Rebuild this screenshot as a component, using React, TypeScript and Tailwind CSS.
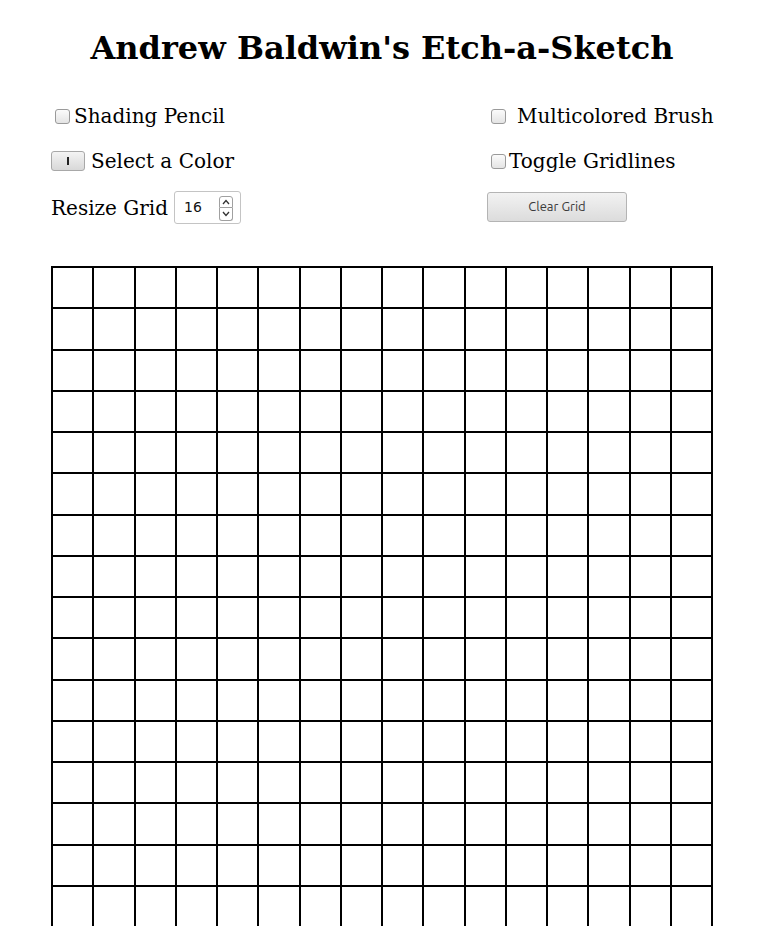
import React from "react";

function Check() {
  return (
    <span className="block w-[15px] h-[15px] rounded-[3px] border border-[#9a9a9a] bg-gradient-to-b from-[#fbfbfb] to-[#e4e4e4] shrink-0" />
  );
}

export default function App() {
  const cells = Array.from({ length: 256 }, (_, i) => i);
  return (
    <div className="w-[784px] bg-white text-black font-['DejaVu_Serif',serif]">
      <div className="w-[764px] pt-[30px] text-center">
        <h1 className="text-[32px] leading-[37px] font-bold">Andrew Baldwin's Etch-a-Sketch</h1>
      </div>
      <div className="flex pl-[51px] mt-[34px] text-[20px]">
        <div className="w-[436px] flex flex-col">
          <div className="h-[30px] flex items-center">
            <span className="ml-[4px] mr-[4px]"><Check /></span>
            <span>Shading Pencil</span>
          </div>
          <div className="h-[30px] mt-[15px] flex items-center">
            <span className="w-[34px] h-[20px] rounded-[3px] border border-[#a8a8a8] bg-gradient-to-b from-[#f4f4f4] to-[#d8d8d8] flex items-center justify-center mr-[6px]">
              <span className="w-[2px] h-[8px] bg-[#222]" />
            </span>
            <span>Select a Color</span>
          </div>
          <div className="h-[33px] mt-[15px] flex items-center">
            <span>Resize Grid</span>
            <span className="ml-[6px] w-[67px] h-[33px] rounded-[3px] border border-[#c4c4c4] bg-white flex items-center relative">
              <span className="ml-[9px] text-[14px] font-['DejaVu_Sans',sans-serif] text-[#111]">16</span>
              <span className="absolute left-[44px] top-[4px] w-[14px] h-[25px] flex flex-col">
                <span className="h-[12px] border border-[#a0a0a0] rounded-t-[3px] flex items-center justify-center">
                  <svg width="8" height="6" viewBox="0 0 8 6"><path d="M1 5 L4 1.5 L7 5" fill="none" stroke="#333" strokeWidth="1.3" /></svg>
                </span>
                <span className="h-[13px] border border-t-0 border-[#a0a0a0] rounded-b-[3px] flex items-center justify-center">
                  <svg width="8" height="6" viewBox="0 0 8 6"><path d="M1 1 L4 4.5 L7 1" fill="none" stroke="#333" strokeWidth="1.3" /></svg>
                </span>
              </span>
            </span>
          </div>
        </div>
        <div className="flex flex-col">
          <div className="h-[30px] flex items-center">
            <span className="ml-[4px] mr-[11px]"><Check /></span>
            <span>Multicolored Brush</span>
          </div>
          <div className="h-[30px] mt-[15px] flex items-center">
            <span className="ml-[4px] mr-[3px]"><Check /></span>
            <span>Toggle Gridlines</span>
          </div>
          <div className="mt-[13px]">
            <button className="w-[140px] h-[30px] rounded-[3px] border border-[#b4b4b4] bg-gradient-to-b from-[#f2f2f2] to-[#dcdcdc] text-[13px] text-[#3a3a3a] font-['Ubuntu','DejaVu_Sans',sans-serif]">
              Clear Grid
            </button>
          </div>
        </div>
      </div>
      <div className="ml-[51px] mt-[42px] w-[662px] h-[662px] bg-black p-[2px] grid grid-cols-16 grid-rows-16 gap-[2px]">
        {cells.map((i) => (
          <div key={i} className="bg-white" />
        ))}
      </div>
    </div>
  );
}
